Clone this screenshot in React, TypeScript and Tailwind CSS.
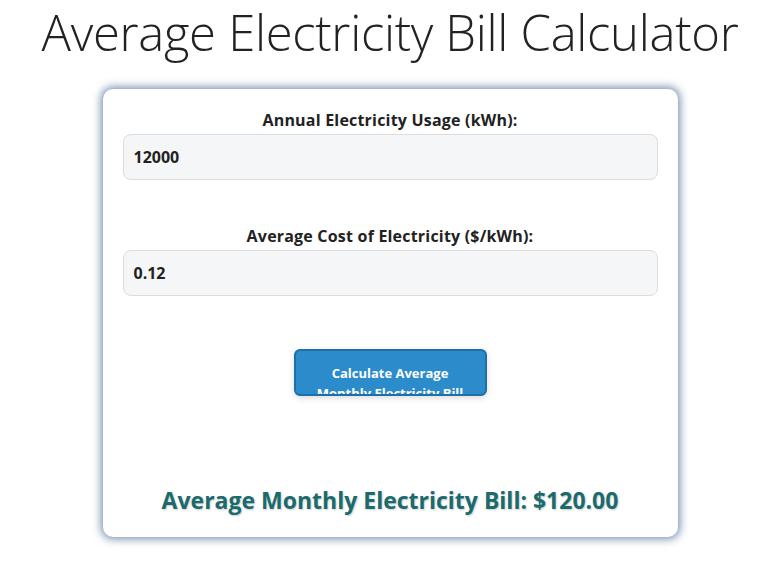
import React from 'react';

const App: React.FC = () => {
  return (
    <div className="min-h-[575px] bg-white pl-[12px] font-['Open_Sans',sans-serif] text-[#222]">
      <h1 className="text-center text-[49px] font-light leading-[64px] tracking-[-0.3px] text-[#222]">
        Average Electricity Bill Calculator
      </h1>

      <div className="mx-auto mt-[25px] w-[575px] rounded-[10px] bg-white px-5 pt-[20px] pb-[22px] shadow-[0_0_8px_2px_rgba(60,95,140,0.7)]">
        <div className="flex flex-col">
          <label className="text-center text-[16px] font-bold leading-[22px] tracking-[0.2px]">Annual Electricity Usage (kWh):</label>
          <div className="mt-[3px] flex h-[46px] items-center rounded-[8px] border border-[#dcdcdc] bg-[#f5f6f7] px-[10px] text-[16px] font-bold">
            12000
          </div>
        </div>

        <div className="mt-[45px] flex flex-col">
          <label className="text-center text-[16px] font-bold leading-[22px] tracking-[0.2px]">Average Cost of Electricity ($/kWh):</label>
          <div className="mt-[3px] flex h-[46px] items-center rounded-[8px] border border-[#dcdcdc] bg-[#f5f6f7] px-[10px] text-[16px] font-bold">
            0.12
          </div>
        </div>

        <div className="mt-[53px] flex justify-center">
          <button className="h-[47px] w-[193px] overflow-hidden rounded-[6px] border-2 border-[#1e6ea8] bg-[#2b8bcb] px-4 pt-[12px] text-center text-[13px] font-bold leading-[20px] text-white shadow-[0_2px_6px_rgba(0,0,0,0.15)]">
            <span className="block">Calculate Average</span>
            <span className="block">Monthly Electricity Bill</span>
          </button>
        </div>

        <p className="mt-[89px] text-center text-[23px] font-bold leading-[30px] text-[#1b6b6e] [text-shadow:1px_1px_2px_rgba(0,0,0,0.2)]">
          Average Monthly Electricity Bill: $120.00
        </p>
      </div>
    </div>
  );
};

export default App;
